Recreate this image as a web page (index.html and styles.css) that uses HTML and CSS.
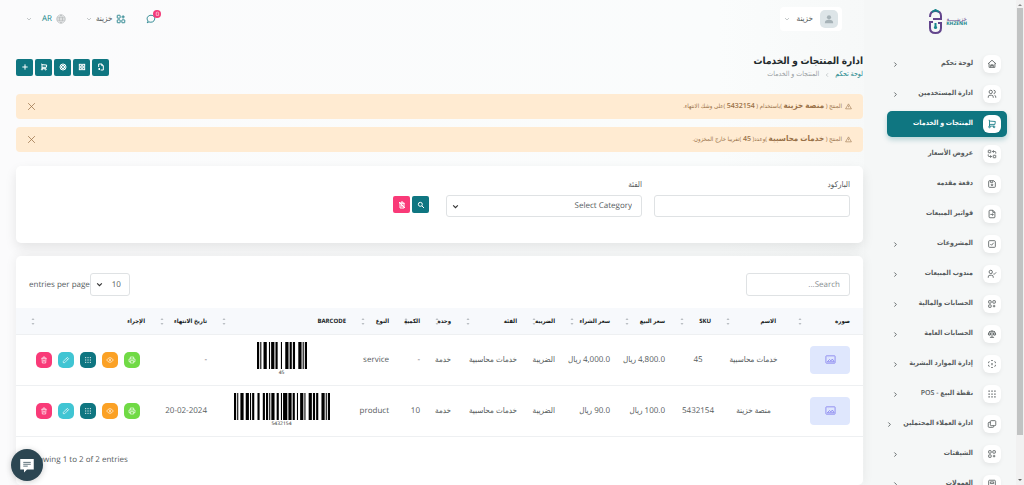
FILE: index.html
```html
<!DOCTYPE html>
<html lang="ar" dir="rtl">
<head>
<meta charset="utf-8">
<title>ادارة المنتجات و الخدمات</title>
<link rel="stylesheet" href="styles.css">
</head>
<body>
<svg class="sprite" aria-hidden="true">
  <symbol id="home" viewBox="0 0 24 24"><path d="M5 11H3l9-8 9 8h-2v9H5zM9 20v-6h6v6M9 16h6"/></symbol>
  <symbol id="users" viewBox="0 0 24 24"><circle cx="9" cy="7" r="4"/><path d="M3 21v-2a4 4 0 0 1 4-4h4a4 4 0 0 1 4 4v2M16 3a4 4 0 0 1 0 8M21 21v-2a4 4 0 0 0-3-4"/></symbol>
  <symbol id="cart" viewBox="0 0 24 24"><circle cx="6" cy="19" r="2"/><circle cx="17" cy="19" r="2"/><path d="M17 17H6V3H4M6 5l14 1-1 7H6"/></symbol>
  <symbol id="swap" viewBox="0 0 24 24"><rect x="3" y="3" width="6" height="6" rx="1"/><rect x="15" y="15" width="6" height="6" rx="1"/><path d="M21 11V8a2 2 0 0 0-2-2h-6l3 3m0-6-3 3M3 13v3a2 2 0 0 0 2 2h6l-3-3m0 6 3-3"/></symbol>
  <symbol id="save" viewBox="0 0 24 24"><path d="M6 4h10l4 4v10a2 2 0 0 1-2 2H6a2 2 0 0 1-2-2V6a2 2 0 0 1 2-2zM14 4v4H8V4"/><circle cx="12" cy="14" r="2"/></symbol>
  <symbol id="file" viewBox="0 0 24 24"><path d="M14 3v5h5M7 3h7l5 5v11a2 2 0 0 1-2 2H7a2 2 0 0 1-2-2V5a2 2 0 0 1 2-2zM8 13h7l-2-2m0 5 2-3"/></symbol>
  <symbol id="check" viewBox="0 0 24 24"><rect x="4" y="4" width="16" height="16" rx="2"/><path d="m8 12 3 3 5-6"/></symbol>
  <symbol id="usercheck" viewBox="0 0 24 24"><circle cx="9" cy="7" r="4"/><path d="M3 21v-2a4 4 0 0 1 4-4h4a4 4 0 0 1 4 4v2M15 11l2 2 5-5"/></symbol>
  <symbol id="apps" viewBox="0 0 24 24"><rect x="3" y="3" width="7" height="7" rx="1"/><rect x="3" y="14" width="7" height="7" rx="1"/><rect x="14" y="14" width="7" height="7" rx="1"/><path d="M13 7h8M17 3v8"/></symbol>
  <symbol id="appsdown" viewBox="0 0 24 24"><rect x="4" y="4" width="6" height="6" rx="1"/><rect x="4" y="14" width="6" height="6" rx="1"/><rect x="14" y="4" width="6" height="6" rx="1"/><path d="M14 17h6M17 14v6"/></symbol>
  <symbol id="scale" viewBox="0 0 24 24"><path d="M7 20h10M6 6l6-1 6 1M12 3v17M9 12 6 6l-3 6a3 3 0 0 0 6 0zM21 12l-3-6-3 6a3 3 0 0 0 6 0zM3 12h6M15 12h6"/></symbol>
  <symbol id="cube" viewBox="0 0 24 24"><path d="m6 18-2-1v-3M4 10V7l2-1M10 4l2-1 2 1M18 6l2 1v3M20 14v3l-2 1M14 20l-2 1-2-1M12 12l2-1M12 12v3M12 12l-2-1"/></symbol>
  <symbol id="dots" viewBox="0 0 24 24"><path stroke-width="3" stroke-linecap="square" d="M5 5h.1M12 5h.1M19 5h.1M5 12h.1M12 12h.1M19 12h.1M5 19h.1M12 19h.1M19 19h.1"/></symbol>
  <symbol id="copy" viewBox="0 0 24 24"><rect x="8" y="4" width="13" height="12" rx="2"/><path d="M8 8H5a2 2 0 0 0-2 2v8a2 2 0 0 0 2 2h9a2 2 0 0 0 2-2v-2"/></symbol>
  <symbol id="calc" viewBox="0 0 24 24"><rect x="4" y="3" width="16" height="18" rx="2"/><path d="M8 7h8v4H8zM8 16h8"/></symbol>
  <symbol id="left" viewBox="0 0 24 24"><path d="m16 5-7 7 7 7"/></symbol>
  <symbol id="right" viewBox="0 0 24 24"><path d="m8 5 7 7-7 7"/></symbol>
  <symbol id="down" viewBox="0 0 24 24"><path d="m4 8 8 8 8-8"/></symbol>
  <symbol id="warn" viewBox="0 0 24 24"><path d="M12 3 2 20h20zM12 9v5M12 16v1"/></symbol>
  <symbol id="close" viewBox="0 0 24 24"><path d="m3 3 18 18M21 3 3 21"/></symbol>
  <symbol id="plus" viewBox="0 0 24 24"><path d="M12 4v16M4 12h16"/></symbol>
  <symbol id="target" viewBox="0 0 24 24"><circle cx="12" cy="12" r="9"/><circle cx="12" cy="12" r="5"/><circle cx="12" cy="12" r="1"/></symbol>
  <symbol id="grid" viewBox="0 0 24 24"><rect x="4" y="4" width="6" height="6"/><rect x="14" y="4" width="6" height="6"/><rect x="4" y="14" width="6" height="6"/><rect x="14" y="14" width="6" height="6"/></symbol>
  <symbol id="import" viewBox="0 0 24 24"><path d="M5 12V3h9l5 5v13h-8M14 3v5h5M3 18h6l-3-3m0 6 3-3"/></symbol>
  <symbol id="search" viewBox="0 0 24 24"><circle cx="10" cy="10" r="6"/><path d="m15 15 6 6"/></symbol>
  <symbol id="trash" viewBox="0 0 24 24"><path d="M4 7h16M9 7V3h6v4M6 7l1 14h10l1-14M10 11v6M14 11v6"/></symbol>
  <symbol id="trashoff" viewBox="0 0 24 24"><path d="M3 3l18 18M4 7h16M9 7V3h6v4M6 7v14h12V7M10 11v6M14 11v6"/></symbol>
  <symbol id="pencil" viewBox="0 0 24 24"><path d="M4 20h4L20 8l-4-4L4 16zM13 7l4 4"/></symbol>
  <symbol id="eye" viewBox="0 0 24 24"><path d="M2 12q10-14 20 0-10 14-20 0z"/><circle cx="12" cy="12" r="2"/></symbol>
  <symbol id="printer" viewBox="0 0 24 24"><path d="M7 9V3h10v6M7 17H3v-8h18v8h-4M7 14h10v7H7z"/></symbol>
  <symbol id="globe" viewBox="0 0 24 24"><circle cx="12" cy="12" r="10"/><path d="M3 8h18M3 16h18M12 2q-8 10 0 20M12 2q8 10 0 20M2 12h20"/></symbol>
  <symbol id="chat" viewBox="0 0 24 24"><path d="M3 21l2-4C-1 9 6 3 12 3c7 0 10 5 9 9-1 7-8 9-14 7zM8 12h.1M12 12h.1M16 12h.1"/></symbol>
  <symbol id="image" viewBox="0 0 24 24"><rect x="2" y="4" width="20" height="16" rx="1"/><path d="m5 17 5-5 3 3 3-4 4 6zM7 8h.2"/></symbol>
  <symbol id="sort" viewBox="0 0 8 16"><path d="M1 5l3-4 3 4zM1 11l3 4 3-4z"/></symbol>
</svg>

<div class="app">
  <aside class="sidebar">
    <a class="logo" href="#" aria-label="Khzenh">
      <svg class="logo-mark" viewBox="0 0 15 26" aria-hidden="true">
        <path class="purple" d="M2 8Q2 2 7.500 2T13 7v3H5"/>
        <path class="teal" d="M4 3l3.500-2L11 3M7.500 14v4"/>
        <path class="purple" d="M5 13H2v6q0 5 5.500 5t5.500-5v-5h-3"/>
        <circle class="drop" cx="7.500" cy="18.500" r="1.600"/>
      </svg>
      <span class="logo-text"><b>خزينـــــة</b><small>KHZENH</small></span>
    </a>
    <nav class="menu">
      <a href="#"><i><svg><use href="#home"/></svg></i><span>لوحة تحكم</span><svg class="chev"><use href="#right"/></svg></a>
      <a href="#"><i><svg><use href="#users"/></svg></i><span>ادارة المستخدمين</span><svg class="chev"><use href="#right"/></svg></a>
      <a href="#" class="active"><i><svg><use href="#cart"/></svg></i><span>المنتجات و الخدمات</span></a>
      <a href="#"><i><svg><use href="#swap"/></svg></i><span>عروض الأسعار</span></a>
      <a href="#"><i><svg><use href="#save"/></svg></i><span>دفعة مقدمه</span></a>
      <a href="#"><i><svg><use href="#file"/></svg></i><span>فواتير المبيعات</span></a>
      <a href="#"><i><svg><use href="#check"/></svg></i><span>المشروعات</span><svg class="chev"><use href="#right"/></svg></a>
      <a href="#"><i><svg><use href="#usercheck"/></svg></i><span>مندوب المبيعات</span><svg class="chev"><use href="#right"/></svg></a>
      <a href="#"><i><svg><use href="#appsdown"/></svg></i><span>الحسابات والمالية</span><svg class="chev"><use href="#right"/></svg></a>
      <a href="#"><i><svg><use href="#scale"/></svg></i><span>الحسابات العامة</span><svg class="chev"><use href="#right"/></svg></a>
      <a href="#"><i><svg><use href="#cube"/></svg></i><span>إدارة الموارد البشرية</span><svg class="chev"><use href="#right"/></svg></a>
      <a href="#"><i><svg><use href="#dots"/></svg></i><span>نقطة البيع - POS</span><svg class="chev"><use href="#right"/></svg></a>
      <a href="#"><i><svg><use href="#copy"/></svg></i><span>ادارة العملاء المحتملين</span><svg class="chev"><use href="#right"/></svg></a>
      <a href="#"><i><svg><use href="#appsdown"/></svg></i><span>الشيفتات</span><svg class="chev"><use href="#right"/></svg></a>
      <a href="#"><i><svg><use href="#calc"/></svg></i><span>العمولات</span><svg class="chev"><use href="#right"/></svg></a>
    </nav>
  </aside>

  <main class="main">
    <header class="topbar">
      <button class="profile"><span class="avatar"><svg viewBox="0 0 24 24"><circle cx="12" cy="8" r="5"/><path d="M2 22q0-8 10-8t10 8z"/></svg></span><span>خزينة</span><svg class="caret"><use href="#down"/></svg></button>
      <div class="tools">
        <button class="chat" aria-label="الرسائل"><svg><use href="#chat"/></svg><span class="badge">0</span></button>
        <button class="tool"><svg class="teal-icon"><use href="#apps"/></svg><span>خزينة</span><svg class="caret"><use href="#down"/></svg></button>
        <button class="tool lang"><svg class="globe"><use href="#globe"/></svg><span>AR</span><svg class="caret"><use href="#down"/></svg></button>
      </div>
    </header>

    <section class="heading">
      <div>
        <h1>ادارة المنتجات و الخدمات</h1>
        <nav class="crumbs"><a href="#">لوحة تحكم</a><svg><use href="#left"/></svg><span>المنتجات و الخدمات</span></nav>
      </div>
      <div class="quick">
        <button class="sq" aria-label="استيراد"><svg><use href="#import"/></svg></button>
        <button class="sq" aria-label="شبكة"><svg><use href="#grid"/></svg></button>
        <button class="sq" aria-label="الهدف"><svg><use href="#target"/></svg></button>
        <button class="sq" aria-label="السلة"><svg><use href="#cart"/></svg></button>
        <button class="sq" aria-label="اضافة"><svg><use href="#plus"/></svg></button>
      </div>
    </section>

    <div class="alert" role="alert"><svg><use href="#warn"/></svg><p>المنتج ( <b>منصة خزينة</b> )باستخدام ( <em>5432154</em> )على وشك الانتهاء.</p><button aria-label="اغلاق"><svg><use href="#close"/></svg></button></div>
    <div class="alert" role="alert"><svg><use href="#warn"/></svg><p>المنتج ( <b>خدمات محاسبية</b> )وعدد( <em>45</em> )تقريبا خارج المخزون.</p><button aria-label="اغلاق"><svg><use href="#close"/></svg></button></div>

    <form class="card filter">
      <div class="field"><label for="barcode">الباركود</label><input id="barcode" type="text"></div>
      <div class="field"><label for="category">الفئة</label><span class="select"><select id="category"><option>Select Category</option></select><svg><use href="#down"/></svg></span></div>
      <div class="filter-actions">
        <button type="button" class="sq" aria-label="بحث"><svg><use href="#search"/></svg></button>
        <button type="button" class="sq pink" aria-label="مسح"><svg><use href="#trashoff"/></svg></button>
      </div>
    </form>

    <section class="card list">
      <div class="list-top">
        <input type="search" aria-label="Search" placeholder="Search...">
        <div class="per-page"><span class="select"><select id="perpage"><option>10</option></select><svg><use href="#down"/></svg></span><label for="perpage">entries per page</label></div>
      </div>
      <table>
        <colgroup><col class="w77"><col class="w65"><col class="w46"><col class="w55"><col class="w55"><col class="w38"><col class="w66"><col class="w31"><col class="w31"><col class="w43"><col class="w139"><col class="w62"><col class="w139"></colgroup>
        <thead><tr>
          <th>صورة<svg><use href="#sort"/></svg></th><th>الاسم<svg><use href="#sort"/></svg></th><th>SKU<svg><use href="#sort"/></svg></th><th>سعر البيع<svg><use href="#sort"/></svg></th><th>سعر الشراء<svg><use href="#sort"/></svg></th><th>الضريبة<svg><use href="#sort"/></svg></th><th>الفئة<svg><use href="#sort"/></svg></th><th>وحدة<svg><use href="#sort"/></svg></th><th>الكمية<svg><use href="#sort"/></svg></th><th>النوع<svg><use href="#sort"/></svg></th><th>BARCODE<svg><use href="#sort"/></svg></th><th>تاريخ الانتهاء<svg><use href="#sort"/></svg></th><th>الإجراء<svg><use href="#sort"/></svg></th>
        </tr></thead>
        <tbody>
          <tr>
            <td><span class="thumb"><svg><use href="#image"/></svg></span></td><td class="mid">خدمات محاسبية</td><td class="mid">45</td><td>4,800.0 ريال</td><td>4,000.0 ريال</td><td>الضريبة</td><td>خدمات محاسبية</td><td>خدمة</td><td>-</td><td>service</td>
            <td><span class="code short"><svg viewBox="0 0 46 10" preserveAspectRatio="none"><path d="M0 5h46" stroke-dasharray="2 1 1 2 3 2 1 1 3 1 2 3 1 3 3 1 2 1 2 3 3 1 1 1 2 0"/></svg><small>45</small></span></td>
            <td>-</td>
            <td><div class="acts"><button class="green" aria-label="طباعة"><svg><use href="#printer"/></svg></button><button class="orange" aria-label="عرض"><svg><use href="#eye"/></svg></button><button aria-label="المستودع"><svg><use href="#dots"/></svg></button><button class="cyan" aria-label="تعديل"><svg><use href="#pencil"/></svg></button><button class="pink" aria-label="حذف"><svg><use href="#trash"/></svg></button></div></td>
          </tr>
          <tr>
            <td><span class="thumb"><svg><use href="#image"/></svg></span></td><td class="mid">منصة خزينة</td><td class="mid">5432154</td><td>100.0 ريال</td><td>90.0 ريال</td><td>الضريبة</td><td>خدمات محاسبية</td><td>خدمة</td><td>10</td><td>product</td>
            <td><span class="code"><svg viewBox="0 0 90 10" preserveAspectRatio="none"><path d="M0 5h90" stroke-dasharray="2 1 1 2 3 2 3 1 1 1 2 3 2 3 2 1 2 1 1 1 3 2 2 2 1 1 4 1 3 1 2 2 1 2 3 1 1 3 3 1 2 1 2 3 3 1 1 1 2 0"/></svg><small>5432154</small></span></td>
            <td>20-02-2024</td>
            <td><div class="acts"><button class="green" aria-label="طباعة"><svg><use href="#printer"/></svg></button><button class="orange" aria-label="عرض"><svg><use href="#eye"/></svg></button><button aria-label="المستودع"><svg><use href="#dots"/></svg></button><button class="cyan" aria-label="تعديل"><svg><use href="#pencil"/></svg></button><button class="pink" aria-label="حذف"><svg><use href="#trash"/></svg></button></div></td>
          </tr>
        </tbody>
      </table>
      <p class="summary" dir="ltr">Showing 1 to 2 of 2 entries</p>
    </section>
  </main>
</div>

<div class="scrollbar" aria-hidden="true"><span class="up"></span><span class="thumb-bar"></span><span class="dn"></span></div>
<button class="bubble" aria-label="Chat"><svg viewBox="0 0 24 24"><path d="M3 4h18v14h-9l-4 4v-4H3z"/><path class="lines" d="M7 8.500h10M7 11h10M7 13.500h6"/></svg></button>
</body>
</html>
```
FILE: styles.css
```css
* { box-sizing: border-box; }
html { height: 100%; }
body {
  margin: 0;
  height: 100%;
  display: flex;
  overflow: hidden;
  flex-direction: row-reverse;
  font: 8px/12px "Open Sans", "DejaVu Sans Condensed", "DejaVu Sans", sans-serif;
  text-rendering: geometricPrecision;
  color: #555b5d;
  background: linear-gradient(to right, #fbfbfc, #fafcfc 70%, #f3f5f5);
}
svg { fill: none; stroke: currentColor; stroke-width: 2; flex: none; display: block; width: 10px; height: 10px; }
button, input, select { font: inherit; color: inherit; margin: 0; text-rendering: inherit; }
button { border: 0; padding: 0; background: none; }
a { color: inherit; text-decoration: none; }
.sprite { position: absolute; width: 0; height: 0; }
.app { flex: 1; min-width: 0; display: flex; }

.scrollbar { width: 8px; flex: none; background: #f1f1f1; display: flex; flex-direction: column; align-items: center; }
.scrollbar .thumb-bar { flex: none; width: 6px; height: 88%; background: #c1c3c3; }
.scrollbar .up, .scrollbar .dn { border: 2px solid transparent; margin: 2px 0; }
.scrollbar .up { border-bottom-color: #888; }
.scrollbar .dn { border-top-color: #666; margin-top: auto; }

.sidebar { width: 152px; flex: none; padding: 8px 9px 0 23px; background: #f5f7f7; overflow: hidden; }
.logo { display: flex; align-items: center; gap: 3px; height: 28px; padding-right: 40px; margin-bottom: 15px; flex-direction: row-reverse; justify-content: flex-end; }
.logo-mark { width: 15px; height: 26px; }
.logo-mark .purple { stroke: #62458c; }
.logo-mark .teal { stroke: #16858a; }
.logo-mark .drop { fill: #16858a; stroke: none; }
.logo-text { display: flex; flex-direction: column; align-items: center; line-height: 5px; }
.logo-text b { font-size: 6px; color: #62458c; font-weight: 400; }
.logo-text small { font-size: 5px; color: #16858a; font-weight: 700; }
.menu { display: flex; flex-direction: column; gap: 4px; }
.menu a { display: flex; align-items: center; gap: 10px; height: 26px; padding: 0 6px 0 5px; border-radius: 5px; font-size: 7px; font-weight: 600; flex: none; }
.menu i { width: 18px; height: 18px; flex: none; border-radius: 6px; background: #fff; display: grid; place-items: center; box-shadow: -1px 2px 5px #00000012; }
.menu span { white-space: nowrap; }
.menu .chev { width: 7px; height: 7px; margin-right: auto; stroke-width: 3; }
.menu .active { background: #0f7681; color: #fff; box-shadow: 0 3px 5px #0f768140; }
.menu .active i { color: #0f7681; }

.main { flex: 1; min-width: 0; padding: 6px 1px 0 16px; display: flex; flex-direction: column; }
.topbar { display: flex; justify-content: space-between; align-items: center; height: 25px; padding: 0 21px 0 10px; margin-bottom: 22px; }
.topbar button { display: flex; align-items: center; gap: 6px; height: 24px; }
.topbar .profile { background: #fff; border-radius: 4px; padding: 0 4px; gap: 7px; }
.avatar { width: 18px; height: 18px; border-radius: 5px; background: #dde5e8; color: #a6b2b7; display: grid; place-items: center; }
.avatar svg { fill: currentColor; stroke: none; }
.topbar .caret { width: 6px; height: 6px; color: #8a9294; }
.tools { display: flex; gap: 20px; }
.tools .tool { gap: 4px; }
.teal-icon, .chat { color: #0f7681; }
.lang { color: #16858a; }
.topbar .lang .caret { margin-right: 6px; }
.globe { color: #b8bcbd; }
.topbar .chat { position: relative; }
.badge { position: absolute; top: 3px; right: -5px; min-width: 8px; height: 8px; border-radius: 4px; background: #f33b78; color: #fff; font-size: 6px; line-height: 8px; text-align: center; }

.heading { display: flex; justify-content: space-between; align-items: center; margin-bottom: 13px; }
h1 { margin: 0 0 2px; font-size: 10px; line-height: 14px; font-weight: 600; color: #1f2a2c; }
.crumbs { display: flex; gap: 5px; align-items: center; font-size: 7px; color: #98a0a2; }
.crumbs a { color: #16858a; }
.crumbs svg { width: 6px; height: 6px; }
.quick, .filter-actions { display: flex; gap: 2px; }
.sq { width: 17px; height: 17px; border-radius: 2px; background: #0f7681; color: #fff; display: grid; place-items: center; }
.sq svg { width: 8px; height: 8px; stroke-width: 3; }
button.sq { background: #0f7681; }
button.pink { background: #f93a78; }

.alert { display: flex; align-items: center; gap: 3px; min-height: 25px; padding: 0 11px; margin-bottom: 8px; border-radius: 4px; background: #ffebd2; color: #997148; font-size: 6px; }
.alert svg { width: 7px; height: 7px; }
.alert p { margin: 0; }
.alert b { font-size: 8px; font-weight: 600; }
.alert em { font-style: normal; font-weight: 600; font-size: 7px; }
.alert button { margin-right: auto; }
.alert button svg { width: 9px; height: 9px; }

.card { background: #fff; border-radius: 5px; box-shadow: 0 5px 12px #00000018; }
.filter { display: flex; gap: 12px; padding: 13px 13px 26px; margin: 6px 0 13px; }
.field { flex: 0 1 196px; display: flex; flex-direction: column; gap: 4px; }
input, select { width: 100%; height: 22px; border: 1px solid #dfe2e4; border-radius: 3px; background: #fff; padding: 0 9px; outline: 0; appearance: none; }
.select { display: grid; align-items: center; }
.select > * { grid-area: 1 / 1; }
.select svg { width: 7px; height: 7px; justify-self: end; margin-left: 6px; stroke-width: 4; color: #333; }
.filter-actions { padding-top: 17px; margin-right: 5px; }

.list { flex: 1; box-shadow: 0 0 12px #00000012; }
.list-top { display: flex; justify-content: space-between; padding: 17px 13px 12px; }
.list-top input { width: 104px; height: 23px; }
.list-top input::placeholder { color: #888e90; opacity: 1; }
.per-page { display: flex; align-items: center; }
.per-page select { width: 40px; height: 23px; padding: 0 8px; }
table { width: 100%; table-layout: fixed; border-collapse: collapse; text-align: right; }
.w77 { width: 77px; } .w65 { width: 65px; } .w46 { width: 46px; } .w55 { width: 55px; } .w38 { width: 38px; } .w66 { width: 66px; } .w31 { width: 31px; } .w43 { width: 43px; } .w139 { width: 139px; } .w62 { width: 62px; }
th, td { padding: 0 10px 0 0; white-space: nowrap; border-bottom: 1px solid #eef0f2; }
th:first-child, td:first-child { padding-right: 13px; }
th { position: relative; height: 26px; background: #f7f9fc; color: #15191b; font-size: 6px; font-weight: 700; }
th svg { position: absolute; left: 5px; top: 9px; width: 4px; height: 9px; fill: #b9bec3; stroke: none; }
th:first-child svg { left: 12px; }
th:last-child svg { left: 15px; }
td { height: 51px; }
td.mid { text-align: center; padding: 0; }
.thumb { display: grid; place-items: center; width: 40px; height: 28px; border-radius: 4px; background: #dfe7fd; color: #8b89f0; }
.thumb svg { width: 11px; height: 11px; }
.code { display: flex; flex-direction: column; align-items: center; width: 96px; margin: 0 auto; }
.code.short { width: 50px; }
.code svg { width: 100%; height: 27px; color: #000; stroke-width: 10; }
.code small { font-size: 5px; line-height: 8px; color: #222; }
.acts { display: flex; gap: 6px; padding-right: 5px; }
.acts button { width: 16px; height: 16px; border-radius: 5px; background: #0f7681; color: #fff; display: grid; place-items: center; }
.acts svg { width: 8px; height: 8px; }
.acts .green { background: #70da45; }
.acts .orange { background: #fba125; }
.acts .cyan { background: #40c5d3; }
.acts .pink { background: #f93a78; }
.summary { margin: 17px 13px; }

.bubble { position: fixed; left: 11px; bottom: 4px; width: 32px; height: 32px; border-radius: 50%; background: #2c4652; display: grid; place-items: center; box-shadow: 0 1px 6px #0003; }
.bubble svg { width: 20px; height: 18px; fill: #fff; stroke: none; }
.bubble .lines { stroke: #2c4652; stroke-width: 1; }
```
